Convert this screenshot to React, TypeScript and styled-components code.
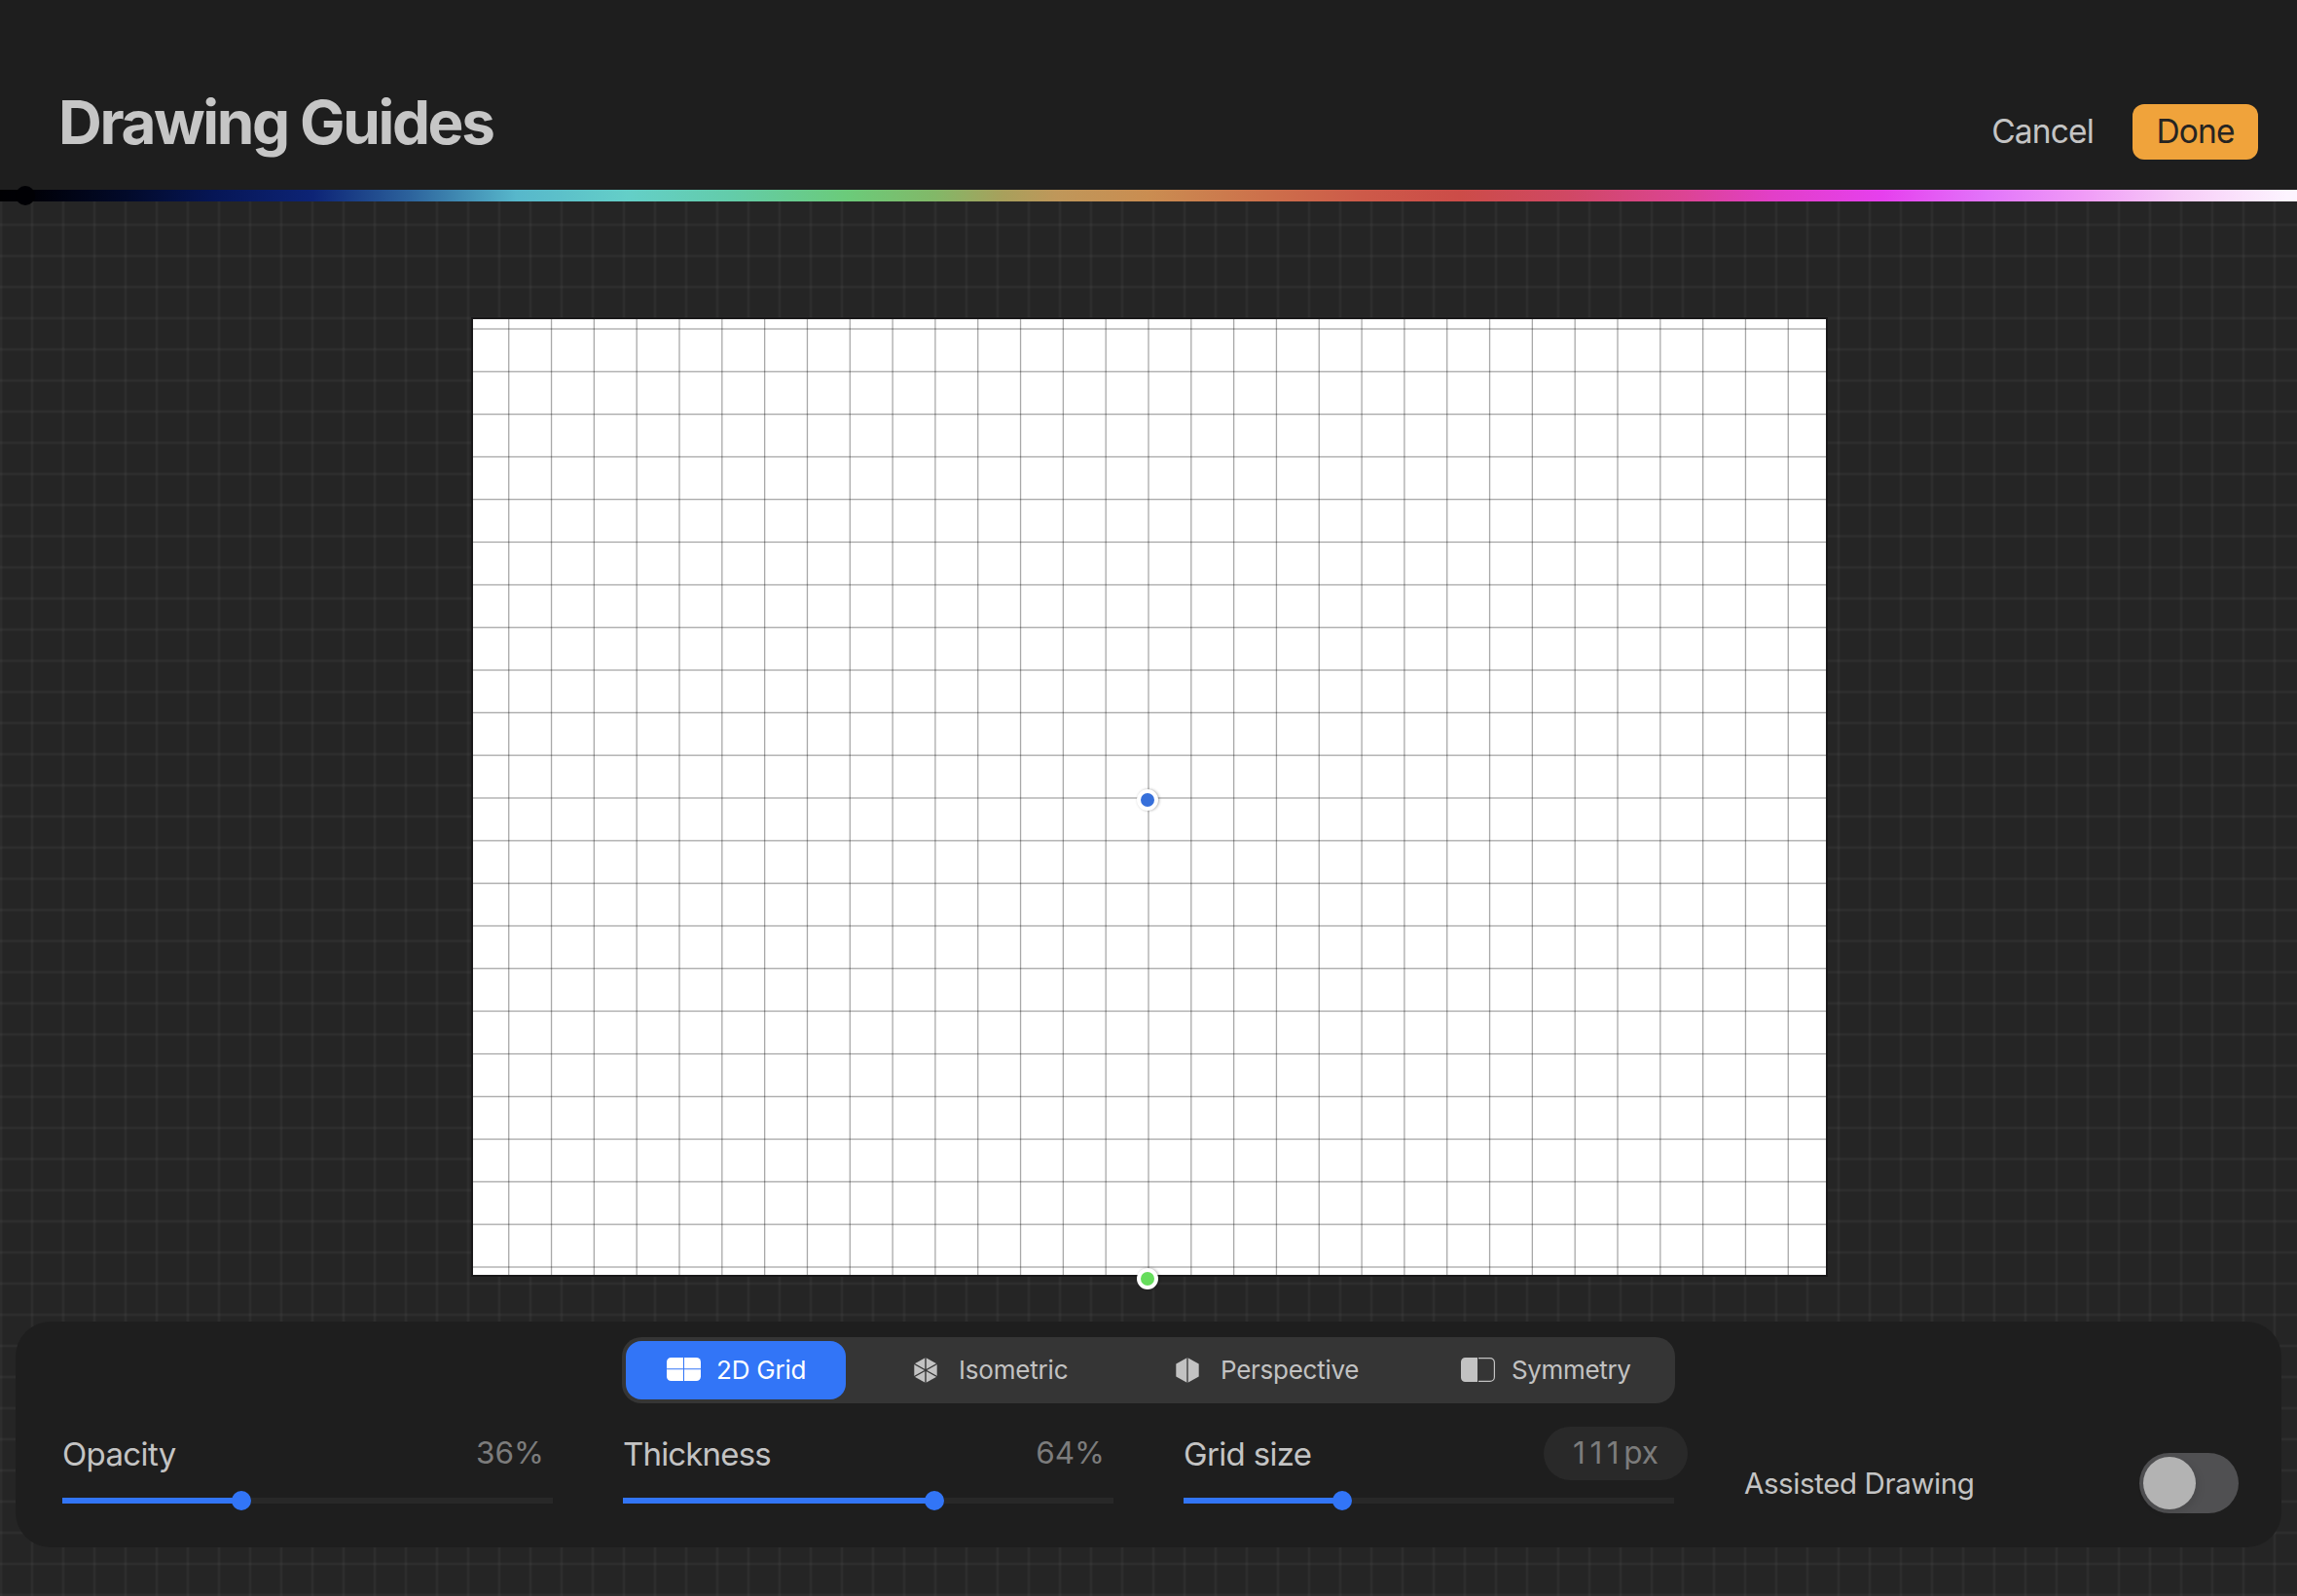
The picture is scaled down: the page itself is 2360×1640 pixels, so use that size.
import React from "react";
import styled, { createGlobalStyle } from "styled-components";

const GlobalStyle = createGlobalStyle`
  * { box-sizing: border-box; }
  body {
    margin: 0;
    background: #252525;
    font-family: Inter, "Liberation Sans", sans-serif;
    color: #c4c4c4;
    -webkit-font-smoothing: antialiased;
  }
  button { font-family: inherit; border: 0; padding: 0; margin: 0; background: none; }
`;

const Screen = styled.div`
  display: flex;
  flex-direction: column;
  width: 2360px;
  height: 1640px;
  overflow: hidden;
`;

const Header = styled.header`
  display: flex;
  justify-content: space-between;
  align-items: flex-start;
  height: 195px;
  padding: 95px 40px 0 60px;
  background: #1e1e1e;
`;

const Title = styled.h1`
  margin: 0;
  padding-top: 1px;
  font-size: 62px;
  line-height: 60px;
  font-weight: 700;
  letter-spacing: -2.38px;
  color: #c6c6c6;
`;

const Actions = styled.div`
  display: flex;
  align-items: center;
  gap: 40px;
  padding-top: 12px;
`;

const TextButton = styled.button`
  height: 57px;
  padding-bottom: 1px;
  font-size: 33.5px;
  color: #c4c4c4;
  letter-spacing: -0.85px;
`;

const PrimaryButton = styled(TextButton)`
  width: 129px;
  border-radius: 12px;
  background: #f0a33b;
  color: #262422;
`;

const HueBar = styled.div`
  position: relative;
  height: 12px;
  background: linear-gradient(
    90deg,
    #000003 0,
    #000006 30px,
    #020a2a 130px,
    #061656 220px,
    #0d2476 322px,
    #2c629c 420px,
    #57b7cb 530px,
    #64cfc8 645px,
    #63ccaa 750px,
    #6bcb7a 870px,
    #82b868 960px,
    #a8a05c 1030px,
    #bf975a 1085px,
    #ca8d51 1180px,
    #cd704b 1300px,
    #cd5a49 1400px,
    #cc4c48 1500px,
    #d04864 1610px,
    #dc4494 1731px,
    #e23fc8 1821px,
    #e640ee 1935px,
    #e274fa 2040px,
    #f09bf7 2140px,
    #f7ccf8 2240px,
    #fdf4ff 2350px
  );
`;

const HueThumb = styled.span`
  position: absolute;
  left: 16px;
  top: -4px;
  width: 20px;
  height: 20px;
  border-radius: 50%;
  background: #000004;
`;

const gridRule = `
  rgba(255, 255, 255, 0.015) 0 1px,
  rgba(255, 255, 255, 0.036) 1px 3px,
  rgba(255, 255, 255, 0.015) 3px 4px,
  transparent 4px
`;

const Workspace = styled.main`
  flex: 1;
  display: flex;
  flex-direction: column;
  padding: 121px 16px 50px;
  background-color: #252525;
  background-image: linear-gradient(90deg, ${gridRule}), linear-gradient(${gridRule});
  background-size: 32px 32px;
  background-position: -1px 22px;
`;

const Artboard = styled.section`
  position: relative;
  width: 1390px;
  height: 982px;
  margin: 0 0 48px 470px;
  background: #fff;
  box-shadow: 0 0 0 2px rgba(24, 22, 24, 0.85);
`;

const GuideSvg = styled.svg`
  display: block;
  width: 1390px;
  height: 982px;
`;

const Handle = styled.span<{ $color: string; $x: number; $y: number }>`
  position: absolute;
  left: ${(p) => p.$x - 11}px;
  top: ${(p) => p.$y - 11}px;
  width: 22px;
  height: 22px;
  border: 4px solid #fff;
  border-radius: 50%;
  background: ${(p) => p.$color};
  box-shadow: 1px 0 3px rgba(0, 0, 0, 0.32);
`;

const Panel = styled.section`
  display: flex;
  flex-direction: column;
  gap: 24px;
  height: 232px;
  padding: 16px 44px 0 48px;
  border-radius: 36px;
  background: #1e1e1e;
`;

const Segmented = styled.nav`
  display: flex;
  align-items: center;
  justify-content: space-between;
  width: 1082px;
  height: 68px;
  margin-left: 575px;
  padding: 4px;
  border-radius: 20px;
  background: #353535;
`;

const Segment = styled.button<{ $active?: boolean; $width: number; $gap: number }>`
  display: flex;
  align-items: center;
  width: ${(p) => p.$width}px;
  height: 60px;
  padding-left: 42px;
  gap: ${(p) => p.$gap}px;
  border-radius: 16px;
  background: ${(p) => (p.$active ? "#3275f7" : "transparent")};
  color: ${(p) => (p.$active ? "#fff" : "#c2c2c2")};
  font-size: 26px;
  line-height: 60px;
  white-space: nowrap;
`;

const SegmentIcon = styled.svg`
  display: block;
  flex: none;
`;

const SegmentText = styled.span<{ $spacing: number }>`
  letter-spacing: ${(p) => p.$spacing}px;
`;

const Controls = styled.div`
  display: grid;
  grid-template-columns: 504px 504px 504px 1fr;
  column-gap: 72px;
`;

const SliderField = styled.div`
  display: flex;
  flex-direction: column;
  gap: 18px;
`;

const FieldHead = styled.div`
  display: flex;
  justify-content: space-between;
  align-items: center;
  height: 55px;
`;

const FieldLabel = styled.label<{ $spacing: number }>`
  padding-top: 2px;
  font-size: 33px;
  line-height: 53px;
  letter-spacing: ${(p) => p.$spacing}px;
  color: #c4c4c4;
`;

const FieldValue = styled.output`
  padding: 0 9px 2px 0;
  font-size: 31.5px;
  font-weight: 400;
  line-height: 53px;
  letter-spacing: 0;
  color: #7c7c7c;
`;

const PillValue = styled(FieldValue)`
  width: 148px;
  height: 55px;
  margin-right: -14px;
  padding: 0 0 2px;
  border-radius: 28px;
  background: #292929;
  text-align: center;
`;

const Digits = styled.span`
  letter-spacing: 4.6px;
`;

const Track = styled.div`
  position: relative;
  height: 6px;
  background: #282828;
`;

const Fill = styled.div`
  height: 6px;
  background: #3275f7;
`;

const Thumb = styled.span`
  position: absolute;
  top: -7px;
  width: 20px;
  height: 20px;
  margin-left: -10px;
  border-radius: 50%;
  background: #3275f7;
`;

const ToggleField = styled.div`
  display: flex;
  align-items: center;
  justify-content: space-between;
  height: 62px;
  margin-top: 27px;
`;

const ToggleLabel = styled.span`
  font-size: 29.5px;
  letter-spacing: -0.4px;
  color: #c4c4c4;
`;

const Toggle = styled.button`
  display: flex;
  align-items: center;
  width: 102px;
  height: 62px;
  padding: 4px;
  border-radius: 31px;
  background: #505052;
`;

const Knob = styled.span`
  width: 54px;
  height: 54px;
  border-radius: 50%;
  background: #b3b3b3;
  box-shadow: 2px 3px 8px rgba(0, 0, 0, 0.1);
`;

const STEP = 43.818;
const CENTER_X = 694;
const CENTER_Y = 492;

function guideLines(center: number, length: number) {
  const lines: number[] = [];
  for (let p = center - Math.floor(center / STEP) * STEP; p < length; p += STEP) lines.push(p);
  return lines;
}

function Guides() {
  return (
    <GuideSvg viewBox="0 0 1390 982">
      <g fill="#000" fillOpacity={0.34}>
        {guideLines(CENTER_X, 1390).map((x) => (
          <rect key={`v${x}`} x={x - 0.65} y={0} width={1.3} height={982} />
        ))}
        {guideLines(CENTER_Y, 982).map((y) => (
          <rect key={`h${y}`} x={0} y={y - 0.65} width={1390} height={1.3} />
        ))}
      </g>
    </GuideSvg>
  );
}

const GridIcon = () => (
  <SegmentIcon width={35} height={26} viewBox="0 0 35 26" fill="currentColor">
    <path d="M4.5 0H17v11.300H0V4.500A4.500 4.500 0 0 1 4.500 0Z" />
    <path d="M18 0h12.500A4.500 4.500 0 0 1 35 4.500v6.800H18Z" />
    <path d="M0 12.300h17V24H4.500A4.500 4.500 0 0 1 0 19.500Z" />
    <path d="M18 12.300h17v7.200a4.500 4.500 0 0 1-4.500 4.500H18Z" />
  </SegmentIcon>
);

const IsometricIcon = () => (
  <SegmentIcon width={24} height={26} viewBox="0 0 24 26">
    <path d="M12 0 23.700 6.500v13L12 26 .3 19.500v-13Z" fill="currentColor" />
    <path d="M12 0v26M0 6.300l24 13.400M24 6.300 0 19.700" stroke="#353535" strokeWidth={1.4} />
  </SegmentIcon>
);

const PerspectiveIcon = () => (
  <SegmentIcon width={24} height={26} viewBox="0 0 24 26">
    <path d="M12 0 23.700 6.500v13L12 26 .3 19.500v-13Z" fill="currentColor" />
    <path d="M12 0v26" stroke="#353535" strokeWidth={1.3} />
  </SegmentIcon>
);

const SymmetryIcon = () => (
  <SegmentIcon width={35} height={26} viewBox="0 0 35 26">
    <path d="M4.500 0H17v25H4.500A4.500 4.500 0 0 1 0 20.500V4.500A4.500 4.500 0 0 1 4.500 0Z" fill="currentColor" />
    <path d="M18 .6h12a4.400 4.400 0 0 1 4.400 4.400v15A4.400 4.400 0 0 1 30 24.400H18" fill="none" stroke="currentColor" strokeWidth={1.2} />
  </SegmentIcon>
);

function sliderLeft(ratio: number) {
  return 10 + ratio * 484;
}

interface SliderProps {
  label: string;
  value: number;
  unit: string;
  ratio: number;
  spacing: number;
  pill?: boolean;
}

function Slider({ label, value, unit, ratio, spacing, pill }: SliderProps) {
  return (
    <SliderField>
      <FieldHead>
        <FieldLabel $spacing={spacing}>{label}</FieldLabel>
        {pill ? (
          <PillValue>
            <Digits>{value}</Digits>
            {unit}
          </PillValue>
        ) : (
          <FieldValue>{`${value}${unit}`}</FieldValue>
        )}
      </FieldHead>
      <Track>
        <Fill style={{ width: sliderLeft(ratio) }} />
        <Thumb style={{ left: sliderLeft(ratio) }} />
      </Track>
    </SliderField>
  );
}

export default function App() {
  return (
    <Screen>
      <GlobalStyle />
      <Header>
        <Title>Drawing Guides</Title>
        <Actions>
          <TextButton>Cancel</TextButton>
          <PrimaryButton>Done</PrimaryButton>
        </Actions>
      </Header>
      <HueBar>
        <HueThumb />
      </HueBar>
      <Workspace>
        <Artboard>
          <Guides />
          <Handle $color="#366fda" $x={693} $y={494} />
          <Handle $color="#66dd5c" $x={693} $y={986} />
        </Artboard>
        <Panel>
          <Segmented>
            <Segment $active $width={226} $gap={16}>
              <GridIcon />
              <SegmentText $spacing={-0.2}>2D Grid</SegmentText>
            </Segment>
            <Segment $width={241} $gap={22}>
              <IsometricIcon />
              <SegmentText $spacing={-0.2}>Isometric</SegmentText>
            </Segment>
            <Segment $width={265} $gap={22}>
              <PerspectiveIcon />
              <SegmentText $spacing={-0.27}>Perspective</SegmentText>
            </Segment>
            <Segment $width={258} $gap={17}>
              <SymmetryIcon />
              <SegmentText $spacing={-0.35}>Symmetry</SegmentText>
            </Segment>
          </Segmented>
          <Controls>
            <Slider label="Opacity" value={36} unit="%" ratio={0.36} spacing={-0.65} />
            <Slider label="Thickness" value={64} unit="%" ratio={0.64} spacing={-0.83} />
            <Slider label="Grid size" value={111} unit="px" ratio={0.316} spacing={-0.67} pill />
            <ToggleField>
              <ToggleLabel>Assisted Drawing</ToggleLabel>
              <Toggle>
                <Knob />
              </Toggle>
            </ToggleField>
          </Controls>
        </Panel>
      </Workspace>
    </Screen>
  );
}
